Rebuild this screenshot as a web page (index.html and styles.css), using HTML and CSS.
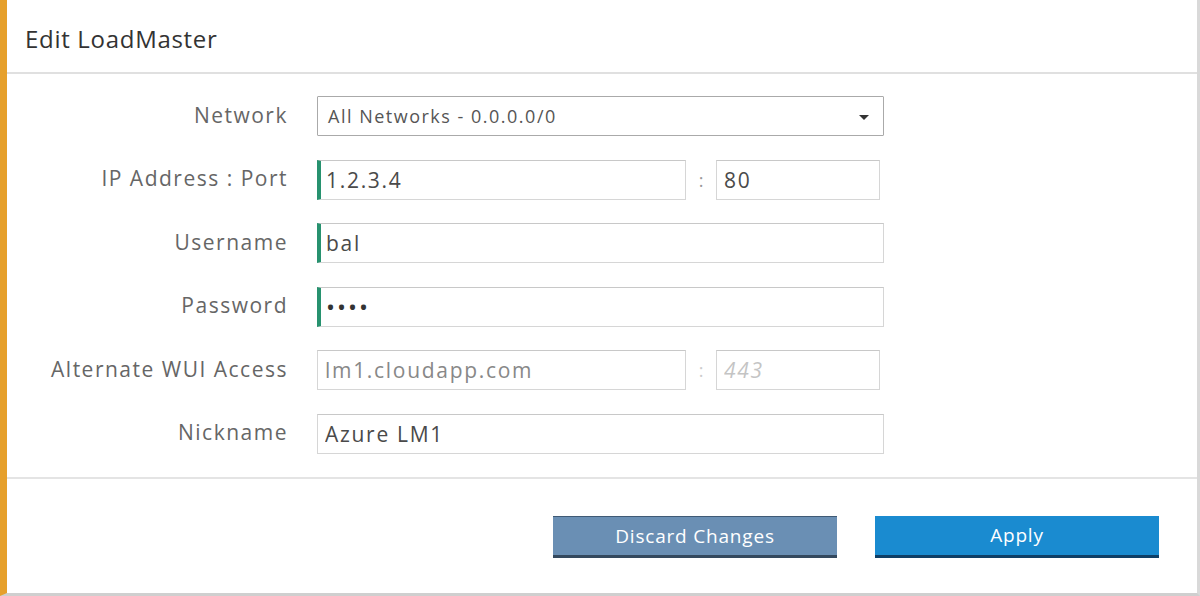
FILE: index.html
```html
<!DOCTYPE html>
<html lang="en">
<head>
    <meta charset="UTF-8">
    <title>Edit LoadMaster</title>
    <link rel="stylesheet" href="styles.css">
</head>
<body>
<div class="dialog">
    <div class="header">Edit LoadMaster</div>

    <div class="form">
        <div class="row">
            <label class="label">Network</label>
            <div class="select">
                <span>All Networks - 0.0.0.0/0</span>
                <span class="caret"></span>
            </div>
        </div>
        <div class="row">
            <label class="label">IP Address : Port</label>
            <div class="pair">
                <input class="input required wide" value="1.2.3.4">
                <span class="colon">:</span>
                <input class="input port" value="80">
            </div>
        </div>
        <div class="row">
            <label class="label">Username</label>
            <input class="input required full" value="bal">
        </div>
        <div class="row">
            <label class="label">Password</label>
            <input class="input required full dots" type="password" value="abcd">
        </div>
        <div class="row">
            <label class="label">Alternate WUI Access</label>
            <div class="pair">
                <input class="input wide muted" value="lm1.cloudapp.com">
                <span class="colon faint">:</span>
                <input class="input port" placeholder="443">
            </div>
        </div>
        <div class="row">
            <label class="label">Nickname</label>
            <input class="input full" value="Azure LM1">
        </div>
    </div>

    <div class="footer">
        <button class="button discard">Discard Changes</button>
        <button class="button apply">Apply</button>
    </div>
</div>
</body>
</html>
```

FILE: styles.css
```css
body {
    margin: 0;
    background: #ffffff;
    font-family: "Open Sans", Lato, sans-serif;
    color: #555;
}

.dialog {
    box-sizing: border-box;
    height: 596px;
    border-left: 7px solid #e6a02c;
    border-right: 3px solid #d9d9d9;
    border-bottom: 3px solid #cfcfcf;
    display: flex;
    flex-direction: column;
}

.header {
    height: 72px;
    padding-left: 18px;
    line-height: 78px;
    font-size: 24px;
    letter-spacing: 0.7px;
    color: #333;
    border-bottom: 2px solid #e0e0e0;
}

.form {
    padding: 22px 0 23px 0;
    display: flex;
    flex-direction: column;
    gap: 23.6px;
    border-bottom: 2px solid #e4e4e4;
}

.row {
    display: grid;
    grid-template-columns: 281px 567px;
    column-gap: 29px;
    align-items: center;
    height: 40px;
}

.label {
    text-align: right;
    font-size: 21px;
    letter-spacing: 1.5px;
    color: #666;
    padding-bottom: 3px;
}

/* 下拉框 */
.select {
    box-sizing: border-box;
    height: 40px;
    border: 1px solid #aaaaaa;
    border-radius: 1px;
    display: flex;
    align-items: center;
    justify-content: space-between;
    padding: 0 14px 0 10px;
    font-size: 18px;
    letter-spacing: 1.5px;
    color: #555;
}

.caret {
    width: 0;
    height: 0;
    border-left: 5px solid transparent;
    border-right: 5px solid transparent;
    border-top: 5px solid #333;
    margin-top: 2px;
}

.pair {
    display: flex;
    align-items: center;
    width: 563px;
}

.input {
    box-sizing: border-box;
    height: 40px;
    border: 1px solid #d6d6d6;
    border-top-color: #c8c8c8;
    padding: 0 7px;
    font-family: "Open Sans", Lato, sans-serif;
    font-size: 21px;
    letter-spacing: 1.7px;
    color: #4a4a4a;
    background: #fff;
    outline: none;
}

.input::placeholder {
    color: #c4c4c4;
    font-style: italic;
}

.required {
    border-left: 4px solid #27926f;
    padding-left: 5px;
}

.full {
    width: 567px;
}

.wide {
    width: 369px;
}

.port {
    width: 164px;
}

.colon {
    width: 30px;
    text-align: center;
    font-size: 18px;
    color: #999;
}

.faint {
    color: #ccc;
}

.muted {
    color: #888;
}

.dots {
    font-size: 24px;
    letter-spacing: 2px;
    color: #333;
}

.footer {
    flex: 1;
    display: flex;
    justify-content: flex-end;
    align-items: flex-start;
    gap: 38px;
    padding: 37px 38px 0 0;
}

.button {
    width: 284px;
    height: 42px;
    border: none;
    border-bottom: 3px solid #2c3e50;
    font-family: "Open Sans", Lato, sans-serif;
    font-size: 19px;
    letter-spacing: 0.8px;
    color: #fff;
    cursor: pointer;
}

.discard {
    background-color: #6a8fb4;
    border-top: 1px solid #3f5a75;
    border-bottom-color: #34495e;
}

.apply {
    background-color: #1a8bd0;
    border-bottom-color: #0f3f66;
}
```
